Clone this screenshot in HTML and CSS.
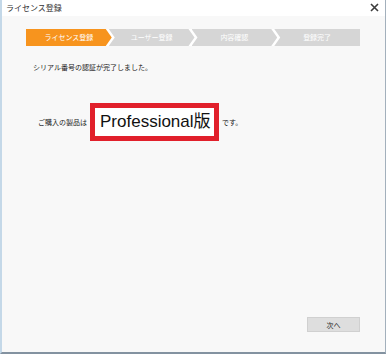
FILE: index.html
```html
<!DOCTYPE html>
<html lang="ja">
<head>
  <meta charset="UTF-8" />
  <title>ライセンス登録</title>
  <link rel="stylesheet" href="styles.css">
</head>
<body>

  <div class="window">
    <div class="titlebar">
      <span class="title">ライセンス登録</span>
      <svg class="close" width="9" height="9" viewBox="0 0 9 9">
        <path d="M1 1 L8 8 M8 1 L1 8" stroke="#3c3c3c" stroke-width="1.6" fill="none"/>
      </svg>
    </div>

    <div class="content">
      <ol class="steps">
        <li class="step step-first active">ライセンス登録</li>
        <li class="step">ユーザー登録</li>
        <li class="step">内容確認</li>
        <li class="step step-last">登録完了</li>
      </ol>

      <p class="message">シリアル番号の認証が完了しました。</p>

      <div class="product">
        <span class="label">ご購入の製品は</span>
        <span class="edition">Professional版</span>
        <span class="label">です。</span>
      </div>

      <div class="footer">
        <button type="button" class="next">次へ</button>
      </div>
    </div>
  </div>

</body>
</html>
```

FILE: styles.css
```css
body {
  margin: 0;
  background: #fff;
  font-family: "Noto Sans CJK JP", "Liberation Sans", sans-serif;
  color: #222;
}

.window {
  width: 386px;
  height: 354px;
  box-sizing: border-box;
  display: flex;
  flex-direction: column;
  border-left: 2px solid #c4d8e8;
  border-right: 1px solid #a3b0bc;
  border-bottom: 2px solid #8392a0;
  background: #f8f8f8;
}

.titlebar {
  height: 16px;
  background: #fff;
  display: flex;
  align-items: center;
  justify-content: space-between;
  padding: 0 4px 2px 4px;
  box-sizing: border-box;
}

.title {
  font-size: 8px;
  color: #333;
}

.close {
  margin-right: 2px;
}

.content {
  flex: 1;
  display: flex;
  flex-direction: column;
}

.steps {
  display: flex;
  width: 334px;
  height: 17px;
  margin: 13px 0 0 24px;
  padding: 0;
  list-style: none;
  background: #fff;
}

.step {
  flex: 1;
  margin-left: -3px;
  background: #d6d6d6;
  color: #fff;
  font-size: 7px;
  line-height: 17px;
  text-align: center;
  clip-path: polygon(0 0, calc(100% - 6px) 0, 100% 50%, calc(100% - 6px) 100%, 0 100%, 6px 50%);
}

.step-first {
  margin-left: 0;
  clip-path: polygon(0 0, calc(100% - 6px) 0, 100% 50%, calc(100% - 6px) 100%, 0 100%);
}

.step-last {
  clip-path: polygon(0 0, 100% 0, 100% 100%, 0 100%, 6px 50%);
}

.step.active {
  background: #f7941e;
}

.message {
  margin: 16px 0 0 31px;
  font-size: 7px;
  line-height: 10px;
}

.product {
  display: flex;
  align-items: center;
  gap: 3px;
  margin: 31px 0 0 36px;
}

.label {
  font-size: 7px;
}

.edition {
  width: 129px;
  height: 38px;
  box-sizing: border-box;
  border: 5px solid #e1202b;
  background: #fff;
  font-family: "Liberation Sans", "Noto Sans CJK JP", sans-serif;
  font-size: 17px;
  line-height: 28px;
  padding-left: 5px;
  white-space: nowrap;
  color: #111;
}

.footer {
  margin-top: auto;
  display: flex;
  justify-content: flex-end;
  padding: 0 25px 20px 0;
}

.next {
  width: 53px;
  height: 15px;
  padding: 0;
  border: 1px solid #d0d0d0;
  background: #dedede;
  font-family: inherit;
  font-size: 7px;
  color: #222;
}
```
